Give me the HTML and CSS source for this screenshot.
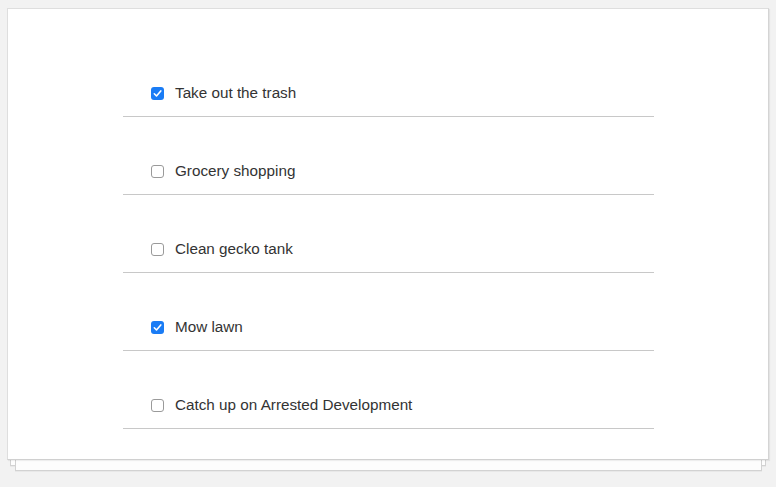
FILE: index.html
```html
<!DOCTYPE html>
<html>
<head>
<meta charset="utf-8">
<link rel="stylesheet" href="styles.css">
</head>
<body>
<div class="card">
  <ul class="list">
    <li class="row"><span class="box checked"><svg viewBox="0 0 13 13" width="13" height="13"><path d="M3.3 6.8 L5.5 9 L9.8 3.9" fill="none" stroke="#fff" stroke-width="1.6" stroke-linecap="round" stroke-linejoin="round"/></svg></span><span class="label">Take out the trash</span></li>
    <li class="row"><span class="box"></span><span class="label">Grocery shopping</span></li>
    <li class="row"><span class="box"></span><span class="label">Clean gecko tank</span></li>
    <li class="row"><span class="box checked"><svg viewBox="0 0 13 13" width="13" height="13"><path d="M3.3 6.8 L5.5 9 L9.8 3.9" fill="none" stroke="#fff" stroke-width="1.6" stroke-linecap="round" stroke-linejoin="round"/></svg></span><span class="label">Mow lawn</span></li>
    <li class="row"><span class="box"></span><span class="label">Catch up on Arrested Development</span></li>
  </ul>
</div>
</body>
</html>
```
FILE: styles.css
```css
html {
  background: #f2f2f2;
}
body {
  margin: 0;
  padding: 8px 7px 0 7px;
  min-height: 487px;
  box-sizing: border-box;
  font-family: "Liberation Sans", Arial, sans-serif;
}
.card {
  position: relative;
  width: 760px;
  height: 450px;
  background: #fff;
  border: 1px solid #dedede;
  border-right-color: #d4d4d4;
  border-bottom-color: #d0d0d0;
  box-shadow: 1px 1px 1px rgba(0,0,0,0.06);
}
.card::before,
.card::after {
  content: "";
  position: absolute;
  height: 40px;
  background: #fdfdfd;
  border: 1px solid #d2d2d2;
  box-sizing: border-box;
  z-index: -1;
  box-shadow: 0 1px 0 rgba(0,0,0,0.04);
}
.card::before {
  left: 2px;
  right: 2px;
  bottom: -7px;
}
.card::after {
  left: 7px;
  right: 6px;
  bottom: -12px;
}
.list {
  list-style: none;
  margin: 0;
  padding: 30px 0 0 0;
  margin-left: 115px;
  width: 531px;
}
.row {
  display: flex;
  align-items: center;
  height: 20px;
  padding: 44px 0 13px 28px;
  border-bottom: 1px solid #c8c8c8;
}
.box {
  width: 13px;
  height: 13px;
  box-sizing: border-box;
  border: 1px solid #9a9a9a;
  border-radius: 3px;
  background: #fff;
  flex: none;
  display: flex;
}
.box.checked {
  border: none;
  background: #1a7cf5;
}
.label {
  margin-left: 11px;
  font-size: 15.25px;
  color: #333;
  line-height: 20px;
}
```
